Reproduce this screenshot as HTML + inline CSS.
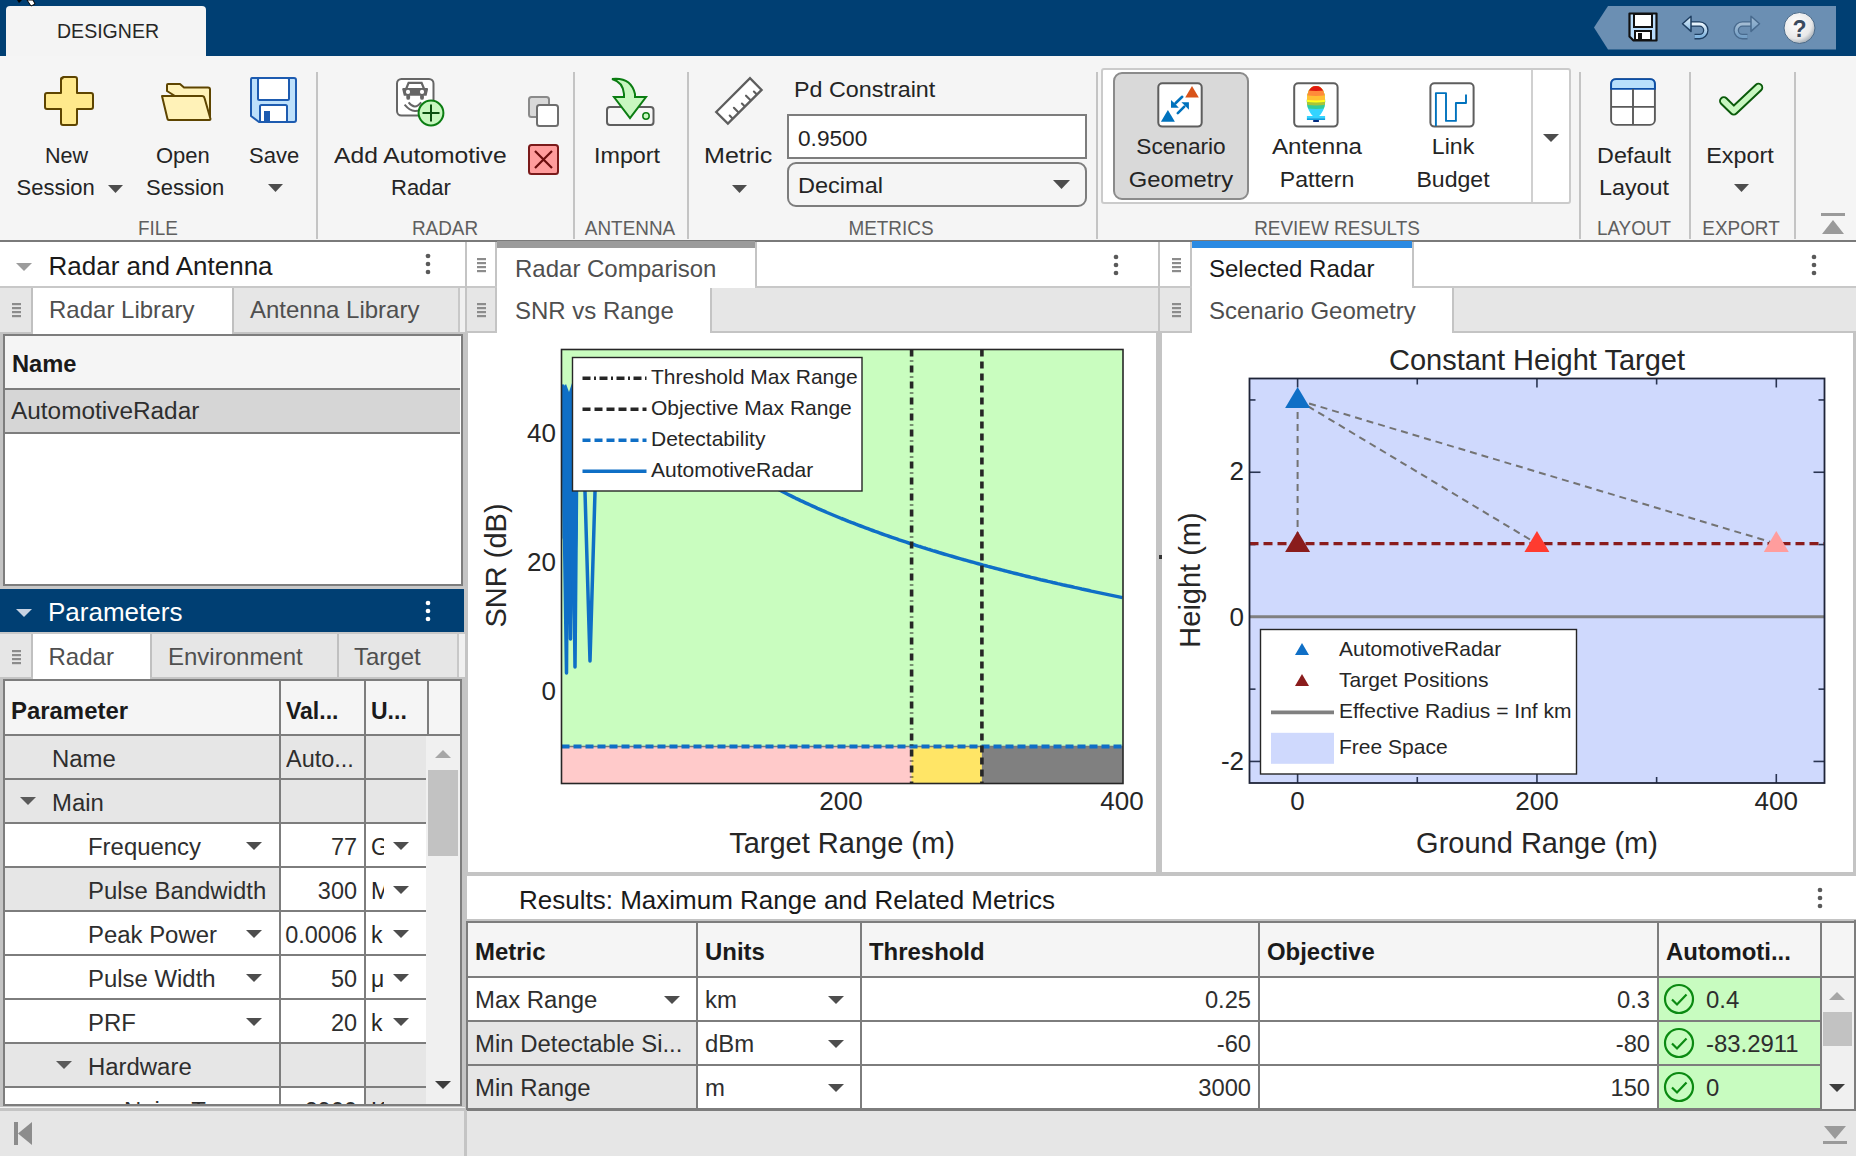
<!DOCTYPE html>
<html><head><meta charset="utf-8"><style>
html,body{margin:0;padding:0;width:1856px;height:1156px;overflow:hidden;background:#fff;}
body{position:relative;font-family:"Liberation Sans",sans-serif;}
.a{position:absolute;box-sizing:border-box;}
.t{position:absolute;white-space:nowrap;}
svg.a{overflow:visible;}
</style></head><body>
<div class="a" style="left:0px;top:0px;width:1856px;height:56px;background:#003f73;"></div>
<div class="a" style="left:6px;top:6px;width:200px;height:50px;background:#f4f4f4;border-radius:4px 4px 0 0"></div>
<div class="t" style="left:57px;top:20.42px;font-size:21px;line-height:21px;color:#262626;transform: scaleX(0.93);transform-origin:left center;">DESIGNER</div>
<svg class="a" style="left:14px;top:0px;" width="24" height="8" viewBox="0 0 24 8"><path d="M3 0 L8 0 L5 3 Z" fill="#000"/><path d="M13 0 L19 0 L21 4 L17 6 Z" fill="#fff" stroke="#000" stroke-width="1"/></svg>
<svg class="a" style="left:1592px;top:5px;" width="246" height="46" viewBox="0 0 246 46"><polygon points="2,22.5 16,1 244,1 244,44.5 16,44.5" fill="#6b8fb3"/><g transform="translate(36,7)"><path d="M1.5 1.5 H28.5 V28.5 H5.5 L1.5 24.5 Z" fill="#b9dcfb" stroke="#111" stroke-width="2.2" stroke-linejoin="round"/><rect x="6" y="2" width="18" height="13" fill="#fff" stroke="#111" stroke-width="2"/><rect x="7" y="19" width="16" height="9" fill="#fff" stroke="#111" stroke-width="2"/><rect x="10" y="21" width="4" height="7" fill="#111"/></g><defs><linearGradient id="ug" x1="0" y1="0" x2="0" y2="1"><stop offset="0" stop-color="#e8f4fc"/><stop offset="1" stop-color="#7fb3de"/></linearGradient></defs><g><path d="M98 19 H107.5 A6.3 6.3 0 0 1 107.5 31.6 H102.5" fill="none" stroke="#1f3f62" stroke-width="5.6"/><path d="M98 19 H107.5 A6.3 6.3 0 0 1 107.5 31.6 H102.5" fill="none" stroke="url(#ug)" stroke-width="3"/><polygon points="90.5,18.8 99,11.2 99,26.4" fill="url(#ug)" stroke="#1f3f62" stroke-width="1.5" stroke-linejoin="round"/></g><g opacity="0.45"><path d="M160 19 H150.5 A6.3 6.3 0 0 0 150.5 31.6 H155.5" fill="none" stroke="#1f3f62" stroke-width="5.6"/><path d="M160 19 H150.5 A6.3 6.3 0 0 0 150.5 31.6 H155.5" fill="none" stroke="url(#ug)" stroke-width="3"/><polygon points="167.5,18.8 159,11.2 159,26.4" fill="url(#ug)" stroke="#1f3f62" stroke-width="1.5" stroke-linejoin="round"/></g><defs><radialGradient id="hg" cx="0.4" cy="0.35" r="0.7"><stop offset="0" stop-color="#ffffff"/><stop offset="0.7" stop-color="#e8e8e8"/><stop offset="1" stop-color="#9aa4ae"/></radialGradient></defs><circle cx="207.5" cy="23" r="15.5" fill="url(#hg)" stroke="#4a6a8a" stroke-width="1"/><text x="207.5" y="31.5" text-anchor="middle" font-family="Liberation Sans" font-weight="700" font-size="23" fill="#3a4a5e">?</text></svg>
<div class="a" style="left:0px;top:56px;width:1856px;height:185px;background:#f5f5f5;"></div>
<div class="a" style="left:0px;top:240px;width:1856px;height:2px;background:#7a7a7a;"></div>
<div class="a" style="left:316px;top:72px;width:2px;height:167px;background:#c4c4c4;"></div>
<div class="a" style="left:573px;top:72px;width:2px;height:167px;background:#c4c4c4;"></div>
<div class="a" style="left:687px;top:72px;width:2px;height:167px;background:#c4c4c4;"></div>
<div class="a" style="left:1096px;top:72px;width:2px;height:167px;background:#c4c4c4;"></div>
<div class="a" style="left:1579px;top:72px;width:2px;height:167px;background:#c4c4c4;"></div>
<div class="a" style="left:1689px;top:72px;width:2px;height:167px;background:#c4c4c4;"></div>
<div class="a" style="left:1794px;top:72px;width:2px;height:167px;background:#c4c4c4;"></div>
<svg class="a" style="left:44px;top:76px;" width="50" height="50" viewBox="0 0 50 50"><path d="M18.5 2.5 Q17 1 17 3 V17 H3 Q1 17 1 19 V31 Q1 33 3 33 H17 V47 Q17 49 19 49 H31 Q33 49 33 47 V33 H47 Q49 33 49 31 V19 Q49 17 47 17 H33 V3 Q33 1 31 1 H19 Z" fill="#ffe98c" stroke="#5e4500" stroke-width="2" stroke-linejoin="round"/></svg>
<div class="t" style="left:44.5px;top:144.68px;font-size:22px;line-height:22px;color:#242424;transform: scaleX(0.98);transform-origin:left center;">New</div>
<div class="t" style="left:16.5px;top:176.98px;font-size:22px;line-height:22px;color:#242424;transform: scaleX(1.0);transform-origin:left center;">Session</div>
<svg class="a" style="left:107.5px;top:184.5px;" width="15" height="8" viewBox="0 0 15 8"><polygon points="0,0 15,0 7.5,8" fill="#4d4d4d"/></svg>
<svg class="a" style="left:160px;top:83px;" width="52" height="40" viewBox="0 0 52 40"><path d="M7 8 V2 Q7 1 8 1 H20 L24 4.5 H48 Q50 4.5 50 6.5 V35 Z" fill="#fff2b8" stroke="#5e4500" stroke-width="2" stroke-linejoin="round"/><path d="M2 13 H42 Q44 13 44.5 15 L50.5 36 Q50.5 37 49.5 37 H9 Q8 37 7.5 36 Z" fill="#fff2b8" stroke="#5e4500" stroke-width="2" stroke-linejoin="round"/></svg>
<div class="t" style="left:156px;top:144.68px;font-size:22px;line-height:22px;color:#242424;">Open</div>
<div class="t" style="left:146px;top:176.98px;font-size:22px;line-height:22px;color:#242424;">Session</div>
<svg class="a" style="left:249px;top:76px;" width="49" height="48" viewBox="0 0 49 48"><path d="M3 2 H45 Q47 2 47 4 V44 Q47 46 45 46 H10 L2 40 V4 Q2 2 3 2 Z" fill="#bde0fb" stroke="#1d5bb0" stroke-width="2" stroke-linejoin="round"/><rect x="9" y="2" width="31" height="22" rx="1.5" fill="#fff" stroke="#1d5bb0" stroke-width="2"/><rect x="11" y="29" width="27" height="17" rx="1.5" fill="#fff" stroke="#1d5bb0" stroke-width="2"/><rect x="15" y="35" width="6" height="11" fill="#1d5bb0"/></svg>
<div class="t" style="left:249px;top:144.68px;font-size:22px;line-height:22px;color:#242424;">Save</div>
<svg class="a" style="left:267.5px;top:184.0px;" width="15" height="8" viewBox="0 0 15 8"><polygon points="0,0 15,0 7.5,8" fill="#4d4d4d"/></svg>
<svg class="a" style="left:394px;top:76px;" width="56" height="54" viewBox="0 0 56 54"><rect x="3" y="3" width="36.5" height="36.5" rx="4.5" fill="#fff" stroke="#666" stroke-width="2"/><path d="M12.3 12.5 L14.6 6.8 H27.6 L29.9 12.5" fill="none" stroke="#666" stroke-width="2.2"/><path d="M9 12 H33.3 Q34.2 12 34 13.5 L32.6 19.8 H9.8 L8.3 13.5 Q8.1 12 9 12 Z" fill="#666"/><circle cx="14" cy="15.9" r="2.1" fill="#fff"/><circle cx="28" cy="15.9" r="2.1" fill="#fff"/><rect x="12.3" y="18" width="3.8" height="5.8" rx="1.9" fill="#666"/><rect x="26.1" y="18" width="3.8" height="5.8" rx="1.9" fill="#666"/><path d="M14.6 26.4 Q20.8 34.5 27.2 26.4" fill="none" stroke="#666" stroke-width="2"/><path d="M10.6 28.6 Q20.8 41 31.5 29.5" fill="none" stroke="#666" stroke-width="2"/><circle cx="37" cy="37" r="12.4" fill="#c8f7c0" stroke="#0b7d12" stroke-width="2"/><path d="M37 28.5 V45.5 M28.5 37 H45.5" stroke="#0b4f10" stroke-width="2"/></svg>
<div class="t" style="left:334px;top:144.68px;font-size:22px;line-height:22px;color:#242424;transform: scaleX(1.12);transform-origin:left center;">Add Automotive</div>
<div class="t" style="left:391px;top:176.98px;font-size:22px;line-height:22px;color:#242424;transform: scaleX(1.0);transform-origin:left center;">Radar</div>
<svg class="a" style="left:527px;top:95px;" width="33" height="33" viewBox="0 0 33 33"><rect x="2" y="2" width="20" height="20" rx="2.5" fill="#d9d9d9" stroke="#8a8a8a" stroke-width="2"/><rect x="10" y="10" width="21" height="21" rx="2.5" fill="#fff" stroke="#6e6e6e" stroke-width="2"/></svg>
<svg class="a" style="left:527px;top:143px;" width="33" height="33" viewBox="0 0 33 33"><rect x="2" y="2" width="29" height="29" rx="2.5" fill="#ff9c9c" stroke="#7a1a1a" stroke-width="2"/><path d="M8 8 L25 25 M25 8 L8 25" stroke="#6b0d0d" stroke-width="2.2"/></svg>
<svg class="a" style="left:604px;top:76px;" width="52" height="52" viewBox="0 0 52 52"><rect x="3" y="31" width="46.5" height="18" rx="3" fill="#f6f6f6" stroke="#5e5e5e" stroke-width="2"/><circle cx="42" cy="40" r="3.2" fill="#c8f7c0" stroke="#0b7d12" stroke-width="1.5"/><path d="M8 3 Q27 1 31 18 V21 H42 L26 42 L10 21 H20 V18 Q19 6 8 3 Z" fill="#c8f7c0" stroke="#0b7d12" stroke-width="2" stroke-linejoin="miter"/></svg>
<div class="t" style="left:594px;top:144.68px;font-size:22px;line-height:22px;color:#242424;transform: scaleX(1.06);transform-origin:left center;">Import</div>
<svg class="a" style="left:712px;top:74px;" width="54" height="54" viewBox="0 0 54 54"><polygon points="4.2,38 38,4.2 49.6,15.9 15.9,49.6" fill="#fff" stroke="#5e5e5e" stroke-width="2.3" stroke-linejoin="miter"/><path d="M20.3 44.2 L17.7 41.6 M26.3 38.2 L21.9 33.8 M32.4 32.1 L29.9 29.6 M38.4 26.1 L34 21.7 M44.4 20.1 L41.9 17.6" stroke="#5e5e5e" stroke-width="2.1" stroke-linecap="round"/></svg>
<div class="t" style="left:704px;top:144.68px;font-size:22px;line-height:22px;color:#242424;transform: scaleX(1.14);transform-origin:left center;">Metric</div>
<svg class="a" style="left:731.5px;top:184.5px;" width="15" height="8" viewBox="0 0 15 8"><polygon points="0,0 15,0 7.5,8" fill="#4d4d4d"/></svg>
<div class="t" style="left:794px;top:79.38px;font-size:22px;line-height:22px;color:#242424;transform: scaleX(1.06);transform-origin:left center;">Pd Constraint</div>
<div class="a" style="left:787px;top:114px;width:300px;height:45px;background:#fff;border:2px solid #7d7d7d"></div>
<div class="t" style="left:798px;top:128.18px;font-size:22px;line-height:22px;color:#242424;transform: scaleX(1.03);transform-origin:left center;">0.9500</div>
<div class="a" style="left:787px;top:162px;width:300px;height:45px;background:#f5f5f5;border:2px solid #7d7d7d;border-radius:9px"></div>
<div class="t" style="left:798px;top:175.38px;font-size:22px;line-height:22px;color:#242424;transform: scaleX(1.07);transform-origin:left center;">Decimal</div>
<svg class="a" style="left:1052.5px;top:179.5px;" width="17" height="9" viewBox="0 0 17 9"><polygon points="0,0 17,0 8.5,9" fill="#4d4d4d"/></svg>
<div class="a" style="left:1101px;top:68px;width:470px;height:136px;background:#fff;border:2px solid #cbcbcb;border-radius:3px"></div>
<div class="a" style="left:1531px;top:70px;width:2px;height:132px;background:#d0d0d0;"></div>
<svg class="a" style="left:1543.0px;top:133.5px;" width="16" height="8" viewBox="0 0 16 8"><polygon points="0,0 16,0 8.0,8" fill="#4d4d4d"/></svg>
<div class="a" style="left:1113px;top:72px;width:136px;height:128px;background:#d9d9d9;border:2px solid #8b8b8b;border-radius:9px"></div>
<svg class="a" style="left:1156px;top:81px;" width="48" height="48" viewBox="0 0 48 48"><rect x="2.3" y="2.2" width="43.4" height="43.4" rx="4" fill="#fff" stroke="#5e5e5e" stroke-width="2"/><polygon points="36,5.1 42.8,16.5 29.2,16.5" fill="#d95319"/><polygon points="11.9,29 18.9,40.7 4.9,40.7" fill="#0072bd"/><path d="M26.2 15.8 L19.5 22.3 M21.8 32.1 L28.3 25.6" stroke="#0072bd" stroke-width="2.6" stroke-linecap="round"/><polygon points="15,19.1 15,26.7 22.8,26.7 19.6,23.3" fill="#0072bd"/><polygon points="32.9,21.2 25.4,21.2 28.8,24.6 32.9,28.7" fill="#0072bd"/></svg>
<div class="t" style="left:1181px;top:136.38px;font-size:22px;line-height:22px;color:#242424;transform:translateX(-50%) scaleX(1.03);transform-origin:center center;">Scenario</div>
<div class="t" style="left:1181px;top:168.88px;font-size:22px;line-height:22px;color:#242424;transform:translateX(-50%) scaleX(1.08);transform-origin:center center;">Geometry</div>
<svg class="a" style="left:1292px;top:81px;" width="48" height="48" viewBox="0 0 48 48"><rect x="2.2" y="2.2" width="43.4" height="43.4" rx="4" fill="#fff" stroke="#5e5e5e" stroke-width="2"/><defs><clipPath id="egg"><path d="M24 4.9 C30.5 4.9 33.1 12 33.1 20 C33.1 28 29.5 33 26.5 35.5 H21.5 C18.5 33 14.9 28 14.9 20 C14.9 12 17.5 4.9 24 4.9 Z"/></clipPath></defs><g clip-path="url(#egg)"><path d="M10 0 H38 V40 Q24 43.2 10 40 Z" fill="#33d4ff"/><path d="M10 0 H38 V26.5 Q24 29.7 10 26.5 Z" fill="#33cc99"/><path d="M10 0 H38 V23 Q24 26.2 10 23 Z" fill="#a8c43a"/><path d="M10 0 H38 V20 Q24 23.2 10 20 Z" fill="#ffff1a"/><path d="M10 0 H38 V18 Q24 21.2 10 18 Z" fill="#ffbf33"/><path d="M10 0 H38 V13.5 Q24 16.7 10 13.5 Z" fill="#ff8a3a"/><path d="M10 0 H38 V8.5 Q24 11.7 10 8.5 Z" fill="#e0190f"/></g><rect x="14.9" y="35" width="18.2" height="2.4" fill="#33d4ff"/><rect x="14.9" y="37.2" width="18.2" height="1.8" fill="#0aa0e0"/><rect x="21.2" y="39" width="5.7" height="2" fill="#002a80"/></svg>
<div class="t" style="left:1317px;top:136.38px;font-size:22px;line-height:22px;color:#242424;transform:translateX(-50%) scaleX(1.1);transform-origin:center center;">Antenna</div>
<div class="t" style="left:1317px;top:168.88px;font-size:22px;line-height:22px;color:#242424;transform:translateX(-50%) scaleX(1.05);transform-origin:center center;">Pattern</div>
<svg class="a" style="left:1428px;top:81px;" width="48" height="48" viewBox="0 0 48 48"><rect x="2.4" y="2.2" width="43.2" height="43.4" rx="4" fill="#fff" stroke="#5e5e5e" stroke-width="2"/><path d="M7.9 45 V12.1 H18 V39.9 H27.9 V22 H38 V13.4" fill="none" stroke="#0072bd" stroke-width="1.9" stroke-linejoin="round"/></svg>
<div class="t" style="left:1453px;top:136.38px;font-size:22px;line-height:22px;color:#242424;transform:translateX(-50%) scaleX(1.05);transform-origin:center center;">Link</div>
<div class="t" style="left:1453px;top:168.88px;font-size:22px;line-height:22px;color:#242424;transform:translateX(-50%) scaleX(1.05);transform-origin:center center;">Budget</div>
<svg class="a" style="left:1608px;top:77px;" width="50" height="50" viewBox="0 0 50 50"><rect x="3.1" y="2.1" width="43.8" height="45.8" rx="5" fill="#fff" stroke="#5a5a5a" stroke-width="1.9"/><path d="M3.1 11.9 V7.1 Q3.1 2.1 8.1 2.1 H41.9 Q46.9 2.1 46.9 7.1 V11.9 Z" fill="#b8e0fc" stroke="#0b4fa8" stroke-width="1.9"/><path d="M3.1 29.9 H46.9 M25 12 V48" stroke="#5a5a5a" stroke-width="1.9"/></svg>
<div class="t" style="left:1634px;top:144.68px;font-size:22px;line-height:22px;color:#242424;transform:translateX(-50%) scaleX(1.06);transform-origin:center center;">Default</div>
<div class="t" style="left:1634px;top:176.98px;font-size:22px;line-height:22px;color:#242424;transform:translateX(-50%) scaleX(1.06);transform-origin:center center;">Layout</div>
<svg class="a" style="left:1716px;top:80px;" width="50" height="40" viewBox="0 0 50 40"><path d="M7.8 21 L17.8 30.8 L42.5 7.5" fill="none" stroke="#0a5a0a" stroke-width="9.5" stroke-linecap="round" stroke-linejoin="round"/><path d="M7.8 21 L17.8 30.8 L42.5 7.5" fill="none" stroke="#c8f7c0" stroke-width="5.6" stroke-linecap="round" stroke-linejoin="round"/></svg>
<div class="t" style="left:1740px;top:144.68px;font-size:22px;line-height:22px;color:#242424;transform:translateX(-50%) scaleX(1.06);transform-origin:center center;">Export</div>
<svg class="a" style="left:1733.5px;top:184.0px;" width="15" height="8" viewBox="0 0 15 8"><polygon points="0,0 15,0 7.5,8" fill="#4d4d4d"/></svg>
<div class="t" style="left:158px;top:217.22px;font-size:21px;line-height:21px;color:#5f5f5f;transform:translateX(-50%) scaleX(0.9);transform-origin:center center;">FILE</div>
<div class="t" style="left:445px;top:217.22px;font-size:21px;line-height:21px;color:#5f5f5f;transform:translateX(-50%) scaleX(0.9);transform-origin:center center;">RADAR</div>
<div class="t" style="left:630px;top:217.22px;font-size:21px;line-height:21px;color:#5f5f5f;transform:translateX(-50%) scaleX(0.9);transform-origin:center center;">ANTENNA</div>
<div class="t" style="left:891px;top:217.22px;font-size:21px;line-height:21px;color:#5f5f5f;transform:translateX(-50%) scaleX(0.9);transform-origin:center center;">METRICS</div>
<div class="t" style="left:1337px;top:217.22px;font-size:21px;line-height:21px;color:#5f5f5f;transform:translateX(-50%) scaleX(0.9);transform-origin:center center;">REVIEW RESULTS</div>
<div class="t" style="left:1634px;top:217.22px;font-size:21px;line-height:21px;color:#5f5f5f;transform:translateX(-50%) scaleX(0.9);transform-origin:center center;">LAYOUT</div>
<div class="t" style="left:1741px;top:217.22px;font-size:21px;line-height:21px;color:#5f5f5f;transform:translateX(-50%) scaleX(0.9);transform-origin:center center;">EXPORT</div>
<svg class="a" style="left:1820px;top:212px;" width="26" height="24" viewBox="0 0 26 24"><rect x="1" y="1" width="24" height="3" fill="#9a9a9a"/><polygon points="2,22 24,22 13,8" fill="#9a9a9a"/></svg>
<div class="a" style="left:0px;top:242px;width:465px;height:914px;background:#c4c4c4;"></div>
<div class="a" style="left:0px;top:242px;width:465px;height:44px;background:#fff;"></div>
<div class="a" style="left:0px;top:286px;width:465px;height:2px;background:#c8c8c8;"></div>
<svg class="a" style="left:16px;top:263px;" width="16" height="8" viewBox="0 0 16 8"><polygon points="0,0 16,0 8.0,8" fill="#9c9c9c"/></svg>
<div class="t" style="left:48.5px;top:253.49px;font-size:26px;line-height:26px;color:#1a1a1a;transform: scaleX(1.0);transform-origin:left center;">Radar and Antenna</div>
<svg class="a" style="left:425px;top:253px;" width="6" height="22" viewBox="0 0 6 22"><circle cx="3" cy="3" r="2.35" fill="#5a5a5a"/><circle cx="3" cy="11" r="2.35" fill="#5a5a5a"/><circle cx="3" cy="19" r="2.35" fill="#5a5a5a"/></svg>
<div class="a" style="left:0px;top:288px;width:465px;height:45px;background:#f0f0f0;"></div>
<div class="a" style="left:0px;top:288px;width:31px;height:45px;background:#e6e6e6;"></div>
<div class="a" style="left:31px;top:288px;width:2px;height:45px;background:#c0c0c0;"></div>
<svg class="a" style="left:12px;top:303px;" width="9" height="15" viewBox="0 0 9 15"><rect x="0" y="0" width="9" height="2.2" fill="#8c8c8c"/><rect x="0" y="4" width="9" height="2.2" fill="#8c8c8c"/><rect x="0" y="8" width="9" height="2.2" fill="#8c8c8c"/><rect x="0" y="12" width="9" height="2.2" fill="#8c8c8c"/></svg>
<div class="a" style="left:33px;top:288px;width:199px;height:46px;background:#fff;"></div>
<div class="a" style="left:232px;top:288px;width:2px;height:45px;background:#c0c0c0;"></div>
<div class="a" style="left:234px;top:288px;width:224px;height:45px;background:#e6e6e6;"></div>
<div class="a" style="left:458px;top:288px;width:2px;height:45px;background:#c8c8c8;"></div>
<div class="a" style="left:0px;top:332px;width:33px;height:2px;background:#c4c4c4;"></div>
<div class="a" style="left:232px;top:332px;width:233px;height:2px;background:#c4c4c4;"></div>
<div class="t" style="left:49px;top:298.48px;font-size:24px;line-height:24px;color:#4f4f4f;">Radar Library</div>
<div class="t" style="left:250px;top:298.48px;font-size:24px;line-height:24px;color:#4f4f4f;">Antenna Library</div>
<div class="a" style="left:3px;top:334px;width:460px;height:252px;background:#fff;border:2px solid #7d7d7d"></div>
<div class="a" style="left:5px;top:336px;width:455px;height:52px;background:#f5f5f5;"></div>
<div class="a" style="left:5px;top:388px;width:455px;height:2px;background:#7d7d7d;"></div>
<div class="a" style="left:5px;top:390px;width:455px;height:42px;background:#d6d6d6;"></div>
<div class="a" style="left:5px;top:432px;width:455px;height:2px;background:#7d7d7d;"></div>
<div class="t" style="left:11.5px;top:353.13px;font-size:23px;line-height:23px;color:#1a1a1a;font-weight:700;transform: scaleX(1.03);transform-origin:left center;">Name</div>
<div class="t" style="left:10.5px;top:400.33px;font-size:23px;line-height:23px;color:#2e2e2e;transform: scaleX(1.06);transform-origin:left center;">AutomotiveRadar</div>
<div class="a" style="left:0px;top:586px;width:465px;height:3px;background:#c8c8c8;"></div>
<div class="a" style="left:0px;top:589px;width:464px;height:43px;background:#003f73;"></div>
<svg class="a" style="left:16px;top:609px;" width="16" height="8" viewBox="0 0 16 8"><polygon points="0,0 16,0 8.0,8" fill="#c8d3e3"/></svg>
<div class="t" style="left:48px;top:598.99px;font-size:26px;line-height:26px;color:#ffffff;">Parameters</div>
<svg class="a" style="left:425px;top:599.5px;" width="6" height="22" viewBox="0 0 6 22"><circle cx="3" cy="3" r="2.35" fill="#ffffff"/><circle cx="3" cy="11" r="2.35" fill="#ffffff"/><circle cx="3" cy="19" r="2.35" fill="#ffffff"/></svg>
<div class="a" style="left:0px;top:632px;width:465px;height:47px;background:#f0f0f0;"></div>
<div class="a" style="left:0px;top:632px;width:31px;height:47px;background:#e6e6e6;"></div>
<div class="a" style="left:31px;top:632px;width:2px;height:47px;background:#c0c0c0;"></div>
<svg class="a" style="left:12px;top:650px;" width="9" height="15" viewBox="0 0 9 15"><rect x="0" y="0" width="9" height="2.2" fill="#8c8c8c"/><rect x="0" y="4" width="9" height="2.2" fill="#8c8c8c"/><rect x="0" y="8" width="9" height="2.2" fill="#8c8c8c"/><rect x="0" y="12" width="9" height="2.2" fill="#8c8c8c"/></svg>
<div class="a" style="left:33px;top:632px;width:117px;height:48px;background:#fff;"></div>
<div class="a" style="left:150px;top:632px;width:2px;height:47px;background:#c0c0c0;"></div>
<div class="a" style="left:152px;top:632px;width:185px;height:47px;background:#e6e6e6;"></div>
<div class="a" style="left:337px;top:632px;width:2px;height:47px;background:#c0c0c0;"></div>
<div class="a" style="left:339px;top:632px;width:118px;height:47px;background:#e6e6e6;"></div>
<div class="a" style="left:457px;top:632px;width:2px;height:47px;background:#c8c8c8;"></div>
<div class="a" style="left:0px;top:677px;width:33px;height:2px;background:#c4c4c4;"></div>
<div class="a" style="left:150px;top:677px;width:315px;height:2px;background:#c4c4c4;"></div>
<div class="a" style="left:0px;top:632px;width:465px;height:2px;background:#c8c8c8;"></div>
<div class="t" style="left:48.5px;top:644.68px;font-size:24px;line-height:24px;color:#4f4f4f;">Radar</div>
<div class="t" style="left:168px;top:644.68px;font-size:24px;line-height:24px;color:#4f4f4f;">Environment</div>
<div class="t" style="left:354px;top:644.68px;font-size:24px;line-height:24px;color:#4f4f4f;">Target</div>
<div class="a" style="left:3px;top:679px;width:459px;height:427px;background:#fff;border:2px solid #7d7d7d"></div>
<div class="a" style="left:5px;top:681px;width:455px;height:53px;background:#f5f5f5;"></div>
<div class="a" style="left:5px;top:734px;width:455px;height:2px;background:#7d7d7d;"></div>
<div class="t" style="left:11px;top:699.53px;font-size:23px;line-height:23px;color:#1a1a1a;font-weight:700;transform: scaleX(1.04);transform-origin:left center;">Parameter</div>
<div class="t" style="left:286px;top:699.53px;font-size:23px;line-height:23px;color:#1a1a1a;font-weight:700;transform: scaleX(1.0);transform-origin:left center;">Val...</div>
<div class="t" style="left:371px;top:699.53px;font-size:23px;line-height:23px;color:#1a1a1a;font-weight:700;transform: scaleX(1.0);transform-origin:left center;">U...</div>
<div class="a" style="left:5px;top:736px;width:421px;height:368px;overflow:hidden">
<div class="a" style="left:0;top:0px;width:274px;height:42px;background:#e6e6e6"></div>
<div class="a" style="left:276px;top:0px;width:83px;height:42px;background:#e6e6e6"></div>
<div class="a" style="left:361px;top:0px;width:61px;height:42px;background:#e6e6e6"></div>
<div class="a" style="left:0;top:42px;width:422px;height:2px;background:#7d7d7d"></div>
<div class="a" style="left:0;top:0px;width:272px;height:42px;overflow:hidden">
<div class="t" style="left:47px;top:11.53px;font-size:23px;line-height:23px;color:#2e2e2e;transform: scaleX(1.04);transform-origin:left center;">Name</div>
</div>
<div class="t" style="left:281px;top:11.53px;font-size:23px;line-height:23px;color:#2e2e2e;transform: scaleX(1.02);transform-origin:left center;">Auto...</div>
<div class="a" style="left:0;top:44px;width:274px;height:42px;background:#e6e6e6"></div>
<div class="a" style="left:276px;top:44px;width:83px;height:42px;background:#e6e6e6"></div>
<div class="a" style="left:361px;top:44px;width:61px;height:42px;background:#e6e6e6"></div>
<div class="a" style="left:0;top:86px;width:422px;height:2px;background:#7d7d7d"></div>
<div class="a" style="left:0;top:44px;width:272px;height:42px;overflow:hidden">
<div class="t" style="left:47px;top:11.53px;font-size:23px;line-height:23px;color:#2e2e2e;transform: scaleX(1.04);transform-origin:left center;">Main</div>
</div>
<svg class="a" style="left:15px;top:61px" width="16" height="8"><polygon points="0,0 16,0 8,8" fill="#5a5a5a"/></svg>
<div class="a" style="left:0;top:88px;width:274px;height:42px;background:#fff"></div>
<div class="a" style="left:276px;top:88px;width:83px;height:42px;background:#fff"></div>
<div class="a" style="left:361px;top:88px;width:61px;height:42px;background:#fff"></div>
<div class="a" style="left:0;top:130px;width:422px;height:2px;background:#7d7d7d"></div>
<div class="a" style="left:0;top:88px;width:272px;height:42px;overflow:hidden">
<div class="t" style="left:83px;top:11.53px;font-size:23px;line-height:23px;color:#2e2e2e;transform: scaleX(1.04);transform-origin:left center;">Frequency</div>
</div>
<svg class="a" style="left:241px;top:106px" width="16" height="8"><polygon points="0,0 16,0 8,8" fill="#4d4d4d"/></svg>
<div class="t" style="left:352px;top:99.53px;font-size:23px;line-height:23px;color:#2e2e2e;transform:translateX(-100%) scaleX(1.02);transform-origin:right center;">77</div>
<div class="a" style="left:361px;top:88px;width:18px;height:42px;overflow:hidden">
<div class="t" style="left:5px;top:11.53px;font-size:23px;line-height:23px;color:#262626;">G</div>
</div>
<svg class="a" style="left:388px;top:106px" width="16" height="8"><polygon points="0,0 16,0 8,8" fill="#4d4d4d"/></svg>
<div class="a" style="left:0;top:132px;width:274px;height:42px;background:#e6e6e6"></div>
<div class="a" style="left:276px;top:132px;width:83px;height:42px;background:#fff"></div>
<div class="a" style="left:361px;top:132px;width:61px;height:42px;background:#fff"></div>
<div class="a" style="left:0;top:174px;width:422px;height:2px;background:#7d7d7d"></div>
<div class="a" style="left:0;top:132px;width:272px;height:42px;overflow:hidden">
<div class="t" style="left:83px;top:11.53px;font-size:23px;line-height:23px;color:#2e2e2e;transform: scaleX(1.04);transform-origin:left center;">Pulse Bandwidth</div>
</div>
<div class="t" style="left:352px;top:143.53px;font-size:23px;line-height:23px;color:#2e2e2e;transform:translateX(-100%) scaleX(1.02);transform-origin:right center;">300</div>
<div class="a" style="left:361px;top:132px;width:18px;height:42px;overflow:hidden">
<div class="t" style="left:5px;top:11.53px;font-size:23px;line-height:23px;color:#262626;">M</div>
</div>
<svg class="a" style="left:388px;top:150px" width="16" height="8"><polygon points="0,0 16,0 8,8" fill="#4d4d4d"/></svg>
<div class="a" style="left:0;top:176px;width:274px;height:42px;background:#fff"></div>
<div class="a" style="left:276px;top:176px;width:83px;height:42px;background:#fff"></div>
<div class="a" style="left:361px;top:176px;width:61px;height:42px;background:#fff"></div>
<div class="a" style="left:0;top:218px;width:422px;height:2px;background:#7d7d7d"></div>
<div class="a" style="left:0;top:176px;width:272px;height:42px;overflow:hidden">
<div class="t" style="left:83px;top:11.53px;font-size:23px;line-height:23px;color:#2e2e2e;transform: scaleX(1.04);transform-origin:left center;">Peak Power</div>
</div>
<svg class="a" style="left:241px;top:194px" width="16" height="8"><polygon points="0,0 16,0 8,8" fill="#4d4d4d"/></svg>
<div class="t" style="left:352px;top:187.53px;font-size:23px;line-height:23px;color:#2e2e2e;transform:translateX(-100%) scaleX(1.02);transform-origin:right center;">0.0006</div>
<div class="a" style="left:361px;top:176px;width:18px;height:42px;overflow:hidden">
<div class="t" style="left:5px;top:11.53px;font-size:23px;line-height:23px;color:#262626;">k</div>
</div>
<svg class="a" style="left:388px;top:194px" width="16" height="8"><polygon points="0,0 16,0 8,8" fill="#4d4d4d"/></svg>
<div class="a" style="left:0;top:220px;width:274px;height:42px;background:#fff"></div>
<div class="a" style="left:276px;top:220px;width:83px;height:42px;background:#fff"></div>
<div class="a" style="left:361px;top:220px;width:61px;height:42px;background:#fff"></div>
<div class="a" style="left:0;top:262px;width:422px;height:2px;background:#7d7d7d"></div>
<div class="a" style="left:0;top:220px;width:272px;height:42px;overflow:hidden">
<div class="t" style="left:83px;top:11.53px;font-size:23px;line-height:23px;color:#2e2e2e;transform: scaleX(1.04);transform-origin:left center;">Pulse Width</div>
</div>
<svg class="a" style="left:241px;top:238px" width="16" height="8"><polygon points="0,0 16,0 8,8" fill="#4d4d4d"/></svg>
<div class="t" style="left:352px;top:231.53px;font-size:23px;line-height:23px;color:#2e2e2e;transform:translateX(-100%) scaleX(1.02);transform-origin:right center;">50</div>
<div class="a" style="left:361px;top:220px;width:18px;height:42px;overflow:hidden">
<div class="t" style="left:5px;top:11.53px;font-size:23px;line-height:23px;color:#262626;">μ</div>
</div>
<svg class="a" style="left:388px;top:238px" width="16" height="8"><polygon points="0,0 16,0 8,8" fill="#4d4d4d"/></svg>
<div class="a" style="left:0;top:264px;width:274px;height:42px;background:#fff"></div>
<div class="a" style="left:276px;top:264px;width:83px;height:42px;background:#fff"></div>
<div class="a" style="left:361px;top:264px;width:61px;height:42px;background:#fff"></div>
<div class="a" style="left:0;top:306px;width:422px;height:2px;background:#7d7d7d"></div>
<div class="a" style="left:0;top:264px;width:272px;height:42px;overflow:hidden">
<div class="t" style="left:83px;top:11.53px;font-size:23px;line-height:23px;color:#2e2e2e;transform: scaleX(1.04);transform-origin:left center;">PRF</div>
</div>
<svg class="a" style="left:241px;top:282px" width="16" height="8"><polygon points="0,0 16,0 8,8" fill="#4d4d4d"/></svg>
<div class="t" style="left:352px;top:275.53px;font-size:23px;line-height:23px;color:#2e2e2e;transform:translateX(-100%) scaleX(1.02);transform-origin:right center;">20</div>
<div class="a" style="left:361px;top:264px;width:18px;height:42px;overflow:hidden">
<div class="t" style="left:5px;top:11.53px;font-size:23px;line-height:23px;color:#262626;">k</div>
</div>
<svg class="a" style="left:388px;top:282px" width="16" height="8"><polygon points="0,0 16,0 8,8" fill="#4d4d4d"/></svg>
<div class="a" style="left:0;top:308px;width:274px;height:42px;background:#e6e6e6"></div>
<div class="a" style="left:276px;top:308px;width:83px;height:42px;background:#e6e6e6"></div>
<div class="a" style="left:361px;top:308px;width:61px;height:42px;background:#e6e6e6"></div>
<div class="a" style="left:0;top:350px;width:422px;height:2px;background:#7d7d7d"></div>
<div class="a" style="left:0;top:308px;width:272px;height:42px;overflow:hidden">
<div class="t" style="left:83px;top:11.53px;font-size:23px;line-height:23px;color:#2e2e2e;transform: scaleX(1.04);transform-origin:left center;">Hardware</div>
</div>
<svg class="a" style="left:51px;top:325px" width="16" height="8"><polygon points="0,0 16,0 8,8" fill="#5a5a5a"/></svg>
<div class="a" style="left:0;top:352px;width:274px;height:42px;background:#fff"></div>
<div class="a" style="left:276px;top:352px;width:83px;height:42px;background:#fff"></div>
<div class="a" style="left:361px;top:352px;width:61px;height:42px;background:#e6e6e6"></div>
<div class="a" style="left:0;top:394px;width:422px;height:2px;background:#7d7d7d"></div>
<div class="a" style="left:0;top:352px;width:272px;height:42px;overflow:hidden">
<div class="t" style="left:119px;top:11.53px;font-size:23px;line-height:23px;color:#2e2e2e;transform: scaleX(1.04);transform-origin:left center;">Noise Temperature</div>
</div>
<div class="t" style="left:352px;top:363.53px;font-size:23px;line-height:23px;color:#2e2e2e;transform:translateX(-100%) scaleX(1.02);transform-origin:right center;">2900</div>
<div class="a" style="left:361px;top:352px;width:18px;height:42px;overflow:hidden">
<div class="t" style="left:5px;top:11.53px;font-size:23px;line-height:23px;color:#262626;">K</div>
</div>
</div>
<div class="a" style="left:279px;top:681px;width:2px;height:424px;background:#7d7d7d;"></div>
<div class="a" style="left:364px;top:681px;width:2px;height:424px;background:#7d7d7d;"></div>
<div class="a" style="left:427px;top:681px;width:2px;height:55px;background:#7d7d7d;"></div>
<div class="a" style="left:426px;top:736px;width:34px;height:368px;background:#f0f0f0;"></div>
<svg class="a" style="left:435px;top:750px;" width="16" height="8" viewBox="0 0 16 8"><polygon points="0,8 16,8 8,0" fill="#a6a6a6"/></svg>
<div class="a" style="left:428px;top:770px;width:30px;height:86px;background:#c2c2c2;"></div>
<svg class="a" style="left:435px;top:1081px;" width="16" height="8" viewBox="0 0 16 8"><polygon points="0,0 16,0 8,8" fill="#3d3d3d"/></svg>
<div class="a" style="left:0px;top:1106px;width:465px;height:5px;background:#c4c4c4;"></div>
<div class="a" style="left:0px;top:1107px;width:465px;height:1px;background:#f2f2f2;"></div>
<div class="a" style="left:0px;top:1111px;width:465px;height:45px;background:#e6e6e6;"></div>
<svg class="a" style="left:14px;top:1122px;" width="19" height="24" viewBox="0 0 19 24"><rect x="0" y="0" width="4" height="23" fill="#8c8c8c"/><polygon points="4,11.5 18,0 18,23" fill="#8c8c8c"/></svg>
<div class="a" style="left:465px;top:242px;width:1391px;height:868px;background:#c4c4c4;"></div>
<div class="a" style="left:465px;top:242px;width:693px;height:44px;background:#fff;"></div>
<div class="a" style="left:465px;top:286px;width:693px;height:2px;background:#c8c8c8;"></div>
<div class="a" style="left:497px;top:286px;width:258px;height:2px;background:#fff;"></div>
<div class="a" style="left:495px;top:242px;width:2px;height:44px;background:#c4c4c4;"></div>
<div class="a" style="left:755px;top:242px;width:2px;height:44px;background:#c4c4c4;"></div>
<div class="a" style="left:497px;top:241px;width:258px;height:7px;background:#9b9b9b;"></div>
<svg class="a" style="left:477px;top:258px;" width="9" height="15" viewBox="0 0 9 15"><rect x="0" y="0" width="9" height="2.2" fill="#8c8c8c"/><rect x="0" y="4" width="9" height="2.2" fill="#8c8c8c"/><rect x="0" y="8" width="9" height="2.2" fill="#8c8c8c"/><rect x="0" y="12" width="9" height="2.2" fill="#8c8c8c"/></svg>
<div class="t" style="left:515px;top:256.98px;font-size:24px;line-height:24px;color:#4f4f4f;">Radar Comparison</div>
<svg class="a" style="left:1113px;top:254px;" width="6" height="22" viewBox="0 0 6 22"><circle cx="3" cy="3" r="2.35" fill="#5a5a5a"/><circle cx="3" cy="11" r="2.35" fill="#5a5a5a"/><circle cx="3" cy="19" r="2.35" fill="#5a5a5a"/></svg>
<div class="a" style="left:465px;top:288px;width:693px;height:45px;background:#e6e6e6;"></div>
<div class="a" style="left:495px;top:288px;width:2px;height:45px;background:#c4c4c4;"></div>
<svg class="a" style="left:477px;top:303px;" width="9" height="15" viewBox="0 0 9 15"><rect x="0" y="0" width="9" height="2.2" fill="#8c8c8c"/><rect x="0" y="4" width="9" height="2.2" fill="#8c8c8c"/><rect x="0" y="8" width="9" height="2.2" fill="#8c8c8c"/><rect x="0" y="12" width="9" height="2.2" fill="#8c8c8c"/></svg>
<div class="a" style="left:497px;top:288px;width:213px;height:46px;background:#fff;"></div>
<div class="a" style="left:710px;top:288px;width:2px;height:45px;background:#c4c4c4;"></div>
<div class="a" style="left:712px;top:331px;width:446px;height:2px;background:#c4c4c4;"></div>
<div class="a" style="left:465px;top:331px;width:32px;height:2px;background:#c4c4c4;"></div>
<div class="t" style="left:515px;top:298.58px;font-size:24px;line-height:24px;color:#4f4f4f;">SNR vs Range</div>
<div class="a" style="left:468px;top:333px;width:688px;height:539px;background:#fff;"></div>
<div class="a" style="left:465px;top:242px;width:2px;height:91px;background:#c4c4c4;"></div>
<div class="a" style="left:1160px;top:242px;width:696px;height:44px;background:#fff;"></div>
<div class="a" style="left:1160px;top:286px;width:696px;height:2px;background:#c8c8c8;"></div>
<div class="a" style="left:1192px;top:286px;width:220px;height:2px;background:#fff;"></div>
<div class="a" style="left:1190px;top:242px;width:2px;height:44px;background:#c4c4c4;"></div>
<div class="a" style="left:1412px;top:242px;width:2px;height:44px;background:#c4c4c4;"></div>
<div class="a" style="left:1192px;top:241px;width:220px;height:7px;background:#2b8ae2;"></div>
<svg class="a" style="left:1172px;top:258px;" width="9" height="15" viewBox="0 0 9 15"><rect x="0" y="0" width="9" height="2.2" fill="#8c8c8c"/><rect x="0" y="4" width="9" height="2.2" fill="#8c8c8c"/><rect x="0" y="8" width="9" height="2.2" fill="#8c8c8c"/><rect x="0" y="12" width="9" height="2.2" fill="#8c8c8c"/></svg>
<div class="t" style="left:1209px;top:256.98px;font-size:24px;line-height:24px;color:#1a1a1a;">Selected Radar</div>
<svg class="a" style="left:1811px;top:254px;" width="6" height="22" viewBox="0 0 6 22"><circle cx="3" cy="3" r="2.35" fill="#5a5a5a"/><circle cx="3" cy="11" r="2.35" fill="#5a5a5a"/><circle cx="3" cy="19" r="2.35" fill="#5a5a5a"/></svg>
<div class="a" style="left:1160px;top:288px;width:696px;height:45px;background:#e6e6e6;"></div>
<div class="a" style="left:1190px;top:288px;width:2px;height:45px;background:#c4c4c4;"></div>
<svg class="a" style="left:1172px;top:303px;" width="9" height="15" viewBox="0 0 9 15"><rect x="0" y="0" width="9" height="2.2" fill="#8c8c8c"/><rect x="0" y="4" width="9" height="2.2" fill="#8c8c8c"/><rect x="0" y="8" width="9" height="2.2" fill="#8c8c8c"/><rect x="0" y="12" width="9" height="2.2" fill="#8c8c8c"/></svg>
<div class="a" style="left:1192px;top:288px;width:260px;height:46px;background:#fff;"></div>
<div class="a" style="left:1452px;top:288px;width:2px;height:45px;background:#c4c4c4;"></div>
<div class="a" style="left:1454px;top:331px;width:402px;height:2px;background:#c4c4c4;"></div>
<div class="a" style="left:1160px;top:331px;width:32px;height:2px;background:#c4c4c4;"></div>
<div class="t" style="left:1209px;top:298.58px;font-size:24px;line-height:24px;color:#4f4f4f;">Scenario Geometry</div>
<div class="a" style="left:1162px;top:333px;width:691px;height:539px;background:#fff;"></div>
<div class="a" style="left:467px;top:876px;width:1389px;height:45px;background:#fff;"></div>
<div class="t" style="left:519px;top:887.29px;font-size:26px;line-height:26px;color:#1a1a1a;">Results: Maximum Range and Related Metrics</div>
<svg class="a" style="left:1817px;top:887px;" width="6" height="22" viewBox="0 0 6 22"><circle cx="3" cy="3" r="2.35" fill="#5a5a5a"/><circle cx="3" cy="11" r="2.35" fill="#5a5a5a"/><circle cx="3" cy="19" r="2.35" fill="#5a5a5a"/></svg>
<div class="a" style="left:466px;top:919px;width:1390px;height:2px;background:#c4c4c4;"></div>
<div class="a" style="left:466px;top:921px;width:1390px;height:190px;background:#fff;border:2px solid #7d7d7d;border-right:none"></div>
<div class="a" style="left:468px;top:923px;width:1388px;height:53px;background:#f5f5f5;"></div>
<div class="a" style="left:468px;top:976px;width:1388px;height:2px;background:#7d7d7d;"></div>
<div class="a" style="left:696px;top:923px;width:2px;height:186px;background:#7d7d7d;"></div>
<div class="a" style="left:860px;top:923px;width:2px;height:186px;background:#7d7d7d;"></div>
<div class="a" style="left:1258px;top:923px;width:2px;height:186px;background:#7d7d7d;"></div>
<div class="a" style="left:1657px;top:923px;width:2px;height:186px;background:#7d7d7d;"></div>
<div class="a" style="left:1820px;top:923px;width:2px;height:186px;background:#7d7d7d;"></div>
<div class="a" style="left:1854px;top:920px;width:2px;height:191px;background:#7d7d7d;"></div>
<div class="t" style="left:475px;top:941.03px;font-size:23px;line-height:23px;color:#1a1a1a;font-weight:700;transform: scaleX(1.04);transform-origin:left center;">Metric</div>
<div class="t" style="left:705px;top:941.03px;font-size:23px;line-height:23px;color:#1a1a1a;font-weight:700;transform: scaleX(1.04);transform-origin:left center;">Units</div>
<div class="t" style="left:869px;top:941.03px;font-size:23px;line-height:23px;color:#1a1a1a;font-weight:700;transform: scaleX(1.04);transform-origin:left center;">Threshold</div>
<div class="t" style="left:1267px;top:941.03px;font-size:23px;line-height:23px;color:#1a1a1a;font-weight:700;transform: scaleX(1.04);transform-origin:left center;">Objective</div>
<div class="t" style="left:1666px;top:941.03px;font-size:23px;line-height:23px;color:#1a1a1a;font-weight:700;transform: scaleX(1.04);transform-origin:left center;">Automoti...</div>
<div class="a" style="left:468px;top:978px;width:228px;height:42px;background:#fff;"></div>
<div class="a" style="left:698px;top:978px;width:162px;height:42px;background:#fff;"></div>
<div class="a" style="left:1659px;top:978px;width:161px;height:42px;background:#c8fcc0;"></div>
<div class="a" style="left:468px;top:1020px;width:1352px;height:2px;background:#7d7d7d;"></div>
<div class="t" style="left:475px;top:988.53px;font-size:23px;line-height:23px;color:#2e2e2e;transform: scaleX(1.04);transform-origin:left center;">Max Range</div>
<svg class="a" style="left:664px;top:996px;" width="16" height="8" viewBox="0 0 16 8"><polygon points="0,0 16,0 8,8" fill="#4d4d4d"/></svg>
<div class="t" style="left:705px;top:988.53px;font-size:23px;line-height:23px;color:#2e2e2e;transform: scaleX(1.04);transform-origin:left center;">km</div>
<svg class="a" style="left:828px;top:996px;" width="16" height="8" viewBox="0 0 16 8"><polygon points="0,0 16,0 8,8" fill="#4d4d4d"/></svg>
<div class="t" style="left:1251px;top:988.53px;font-size:23px;line-height:23px;color:#2e2e2e;transform:translateX(-100%) scaleX(1.03);transform-origin:right center;">0.25</div>
<div class="t" style="left:1650px;top:988.53px;font-size:23px;line-height:23px;color:#2e2e2e;transform:translateX(-100%) scaleX(1.03);transform-origin:right center;">0.3</div>
<svg class="a" style="left:1663px;top:983px;" width="32" height="32" viewBox="0 0 32 32"><circle cx="16" cy="16" r="14" fill="none" stroke="#0b8a12" stroke-width="2.2"/><path d="M9 16.5 L14 21.5 L23.5 11.5" fill="none" stroke="#0b8a12" stroke-width="2.2"/></svg>
<div class="t" style="left:1706px;top:988.53px;font-size:23px;line-height:23px;color:#2e2e2e;transform: scaleX(1.04);transform-origin:left center;">0.4</div>
<div class="a" style="left:468px;top:1022px;width:228px;height:42px;background:#e6e6e6;"></div>
<div class="a" style="left:698px;top:1022px;width:162px;height:42px;background:#fff;"></div>
<div class="a" style="left:1659px;top:1022px;width:161px;height:42px;background:#c8fcc0;"></div>
<div class="a" style="left:468px;top:1064px;width:1352px;height:2px;background:#7d7d7d;"></div>
<div class="t" style="left:475px;top:1032.53px;font-size:23px;line-height:23px;color:#2e2e2e;transform: scaleX(1.04);transform-origin:left center;">Min Detectable Si...</div>
<div class="t" style="left:705px;top:1032.53px;font-size:23px;line-height:23px;color:#2e2e2e;transform: scaleX(1.04);transform-origin:left center;">dBm</div>
<svg class="a" style="left:828px;top:1040px;" width="16" height="8" viewBox="0 0 16 8"><polygon points="0,0 16,0 8,8" fill="#4d4d4d"/></svg>
<div class="t" style="left:1251px;top:1032.53px;font-size:23px;line-height:23px;color:#2e2e2e;transform:translateX(-100%) scaleX(1.03);transform-origin:right center;">-60</div>
<div class="t" style="left:1650px;top:1032.53px;font-size:23px;line-height:23px;color:#2e2e2e;transform:translateX(-100%) scaleX(1.03);transform-origin:right center;">-80</div>
<svg class="a" style="left:1663px;top:1027px;" width="32" height="32" viewBox="0 0 32 32"><circle cx="16" cy="16" r="14" fill="none" stroke="#0b8a12" stroke-width="2.2"/><path d="M9 16.5 L14 21.5 L23.5 11.5" fill="none" stroke="#0b8a12" stroke-width="2.2"/></svg>
<div class="t" style="left:1706px;top:1032.53px;font-size:23px;line-height:23px;color:#2e2e2e;transform: scaleX(1.04);transform-origin:left center;">-83.2911</div>
<div class="a" style="left:468px;top:1066px;width:228px;height:42px;background:#e6e6e6;"></div>
<div class="a" style="left:698px;top:1066px;width:162px;height:42px;background:#fff;"></div>
<div class="a" style="left:1659px;top:1066px;width:161px;height:42px;background:#c8fcc0;"></div>
<div class="a" style="left:468px;top:1108px;width:1352px;height:2px;background:#7d7d7d;"></div>
<div class="t" style="left:475px;top:1076.53px;font-size:23px;line-height:23px;color:#2e2e2e;transform: scaleX(1.04);transform-origin:left center;">Min Range</div>
<div class="t" style="left:705px;top:1076.53px;font-size:23px;line-height:23px;color:#2e2e2e;transform: scaleX(1.04);transform-origin:left center;">m</div>
<svg class="a" style="left:828px;top:1084px;" width="16" height="8" viewBox="0 0 16 8"><polygon points="0,0 16,0 8,8" fill="#4d4d4d"/></svg>
<div class="t" style="left:1251px;top:1076.53px;font-size:23px;line-height:23px;color:#2e2e2e;transform:translateX(-100%) scaleX(1.03);transform-origin:right center;">3000</div>
<div class="t" style="left:1650px;top:1076.53px;font-size:23px;line-height:23px;color:#2e2e2e;transform:translateX(-100%) scaleX(1.03);transform-origin:right center;">150</div>
<svg class="a" style="left:1663px;top:1071px;" width="32" height="32" viewBox="0 0 32 32"><circle cx="16" cy="16" r="14" fill="none" stroke="#0b8a12" stroke-width="2.2"/><path d="M9 16.5 L14 21.5 L23.5 11.5" fill="none" stroke="#0b8a12" stroke-width="2.2"/></svg>
<div class="t" style="left:1706px;top:1076.53px;font-size:23px;line-height:23px;color:#2e2e2e;transform: scaleX(1.04);transform-origin:left center;">0</div>
<div class="a" style="left:1822px;top:978px;width:32px;height:131px;background:#f0f0f0;"></div>
<svg class="a" style="left:1829px;top:992px;" width="16" height="8" viewBox="0 0 16 8"><polygon points="0,8 16,8 8,0" fill="#a6a6a6"/></svg>
<div class="a" style="left:1823px;top:1012px;width:29px;height:34px;background:#c2c2c2;"></div>
<svg class="a" style="left:1829px;top:1084px;" width="16" height="8" viewBox="0 0 16 8"><polygon points="0,0 16,0 8,8" fill="#3d3d3d"/></svg>
<div class="a" style="left:467px;top:1111px;width:1389px;height:45px;background:#e6e6e6;"></div>
<div class="a" style="left:464px;top:1110px;width:3px;height:46px;background:#c4c4c4;"></div>
<svg class="a" style="left:1822px;top:1124px;" width="26" height="22" viewBox="0 0 26 22"><polygon points="2,2 24,2 13,15" fill="#9a9a9a"/><rect x="1" y="17" width="24" height="3" fill="#9a9a9a"/></svg>
<div class="a" style="left:1159px;top:555px;width:3px;height:4px;background:#333;"></div>
<svg class="a" style="left:0;top:0;overflow:hidden" width="1856" height="1156" viewBox="0 0 1856 1156"><rect x="561.5" y="349.5" width="561.5" height="434.0" fill="#c9fdbf"/><rect x="561.5" y="746.6" width="350.1" height="36.89999999999998" fill="#ffcaca"/><rect x="911.6" y="746.6" width="70.29999999999995" height="36.89999999999998" fill="#ffe566"/><rect x="981.9" y="746.6" width="141.10000000000002" height="36.89999999999998" fill="#808080"/><line x1="561.5" y1="746.6" x2="1123" y2="746.6" stroke="#7a7a7a" stroke-width="1.5"/><line x1="561.5" y1="746.6" x2="1123" y2="746.6" stroke="#0f6fc6" stroke-width="4" stroke-dasharray="8 4"/><defs><clipPath id="snrclip"><rect x="561.5" y="349.5" width="561.5" height="434.0"/></clipPath></defs><polyline clip-path="url(#snrclip)" points="644.5,380.9 646.9,384.1 649.3,387.2 651.7,390.3 654.1,393.2 656.5,396.1 658.9,398.9 661.3,401.7 663.7,404.3 666.1,407.0 668.5,409.5 670.9,412.0 673.3,414.5 675.7,416.9 678.1,419.2 680.5,421.5 682.9,423.8 685.3,426.0 687.7,428.2 690.1,430.3 692.5,432.4 694.9,434.4 697.3,436.5 699.7,438.4 702.1,440.4 704.5,442.3 706.9,444.2 709.3,446.0 711.7,447.9 714.1,449.7 716.5,451.4 718.9,453.2 721.3,454.9 723.7,456.6 726.1,458.2 728.5,459.9 730.9,461.5 733.3,463.1 735.7,464.7 738.1,466.2 740.5,467.7 743.0,469.3 745.4,470.7 747.8,472.2 750.2,473.7 752.6,475.1 755.0,476.5 757.4,477.9 759.8,479.3 762.2,480.7 764.6,482.0 767.0,483.4 769.4,484.7 771.8,486.0 774.2,487.3 776.6,488.5 779.0,489.8 781.4,491.0 783.8,492.3 786.2,493.5 788.6,494.7 791.0,495.9 793.4,497.1 795.8,498.3 798.2,499.4 800.6,500.6 803.0,501.7 805.4,502.8 807.8,503.9 810.2,505.0 812.6,506.1 815.0,507.2 817.4,508.3 819.8,509.3 822.2,510.4 824.6,511.4 827.0,512.5 829.4,513.5 831.8,514.5 834.2,515.5 836.6,516.5 839.0,517.5 841.4,518.5 843.8,519.4 846.2,520.4 848.6,521.4 851.1,522.3 853.5,523.2 855.9,524.2 858.3,525.1 860.7,526.0 863.1,526.9 865.5,527.8 867.9,528.7 870.3,529.6 872.7,530.5 875.1,531.4 877.5,532.2 879.9,533.1 882.3,534.0 884.7,534.8 887.1,535.6 889.5,536.5 891.9,537.3 894.3,538.1 896.7,538.9 899.1,539.8 901.5,540.6 903.9,541.4 906.3,542.2 908.7,543.0 911.1,543.7 913.5,544.5 915.9,545.3 918.3,546.1 920.7,546.8 923.1,547.6 925.5,548.3 927.9,549.1 930.3,549.8 932.7,550.6 935.1,551.3 937.5,552.0 939.9,552.8 942.3,553.5 944.7,554.2 947.1,554.9 949.5,555.6 951.9,556.3 954.3,557.0 956.7,557.7 959.1,558.4 961.6,559.1 964.0,559.8 966.4,560.4 968.8,561.1 971.2,561.8 973.6,562.4 976.0,563.1 978.4,563.8 980.8,564.4 983.2,565.1 985.6,565.7 988.0,566.4 990.4,567.0 992.8,567.6 995.2,568.3 997.6,568.9 1000.0,569.5 1002.4,570.1 1004.8,570.8 1007.2,571.4 1009.6,572.0 1012.0,572.6 1014.4,573.2 1016.8,573.8 1019.2,574.4 1021.6,575.0 1024.0,575.6 1026.4,576.2 1028.8,576.8 1031.2,577.4 1033.6,577.9 1036.0,578.5 1038.4,579.1 1040.8,579.7 1043.2,580.2 1045.6,580.8 1048.0,581.4 1050.4,581.9 1052.8,582.5 1055.2,583.0 1057.6,583.6 1060.0,584.1 1062.4,584.7 1064.8,585.2 1067.2,585.8 1069.7,586.3 1072.1,586.8 1074.5,587.4 1076.9,587.9 1079.3,588.4 1081.7,589.0 1084.1,589.5 1086.5,590.0 1088.9,590.5 1091.3,591.1 1093.7,591.6 1096.1,592.1 1098.5,592.6 1100.9,593.1 1103.3,593.6 1105.7,594.1 1108.1,594.6 1110.5,595.1 1112.9,595.6 1115.3,596.1 1117.7,596.6 1120.1,597.1 1122.5,597.6" fill="none" stroke="#0f6fc6" stroke-width="3.5" stroke-linejoin="round"/><polyline points="563,386 564,500 566.5,673 568,420 570.5,639 572,405 575,667 577,430 579,380 585,492 590,661 595,492 600,380" fill="none" stroke="#0f6fc6" stroke-width="3.5" stroke-linejoin="round" stroke-linecap="round"/><polygon points="562.5,388 566,384 569,392 573,380 577,386 578,520 574,640 570,560 567,520 562.5,540" fill="#0f6fc6"/><line x1="911.6" y1="349.5" x2="911.6" y2="783.5" stroke="#262626" stroke-width="3.6" stroke-dasharray="7 4 1 4"/><line x1="981.9" y1="349.5" x2="981.9" y2="783.5" stroke="#262626" stroke-width="3.6" stroke-dasharray="7 5"/><rect x="561.5" y="349.5" width="561.5" height="434.0" fill="none" stroke="#262626" stroke-width="1.6"/><rect x="572.5" y="357.5" width="289.5" height="133.5" fill="#fff" stroke="#262626" stroke-width="1.4"/><line x1="582.5" y1="378.2" x2="646.5" y2="378.2" stroke="#262626" stroke-width="3.6" stroke-dasharray="8 3.5 2 3.5"/><text x="651" y="383.8" font-family="Liberation Sans" font-size="21" fill="#262626">Threshold Max Range</text><line x1="582.5" y1="409.2" x2="646.5" y2="409.2" stroke="#262626" stroke-width="3.6" stroke-dasharray="8 4"/><text x="651" y="414.8" font-family="Liberation Sans" font-size="21" fill="#262626">Objective Max Range</text><line x1="582.5" y1="440.2" x2="646.5" y2="440.2" stroke="#0f6fc6" stroke-width="3.6" stroke-dasharray="8 4"/><text x="651" y="445.8" font-family="Liberation Sans" font-size="21" fill="#262626">Detectability</text><line x1="582.5" y1="471.2" x2="646.5" y2="471.2" stroke="#0f6fc6" stroke-width="3.6"/><text x="651" y="476.8" font-family="Liberation Sans" font-size="21" fill="#262626">AutomotiveRadar</text><text x="556" y="441.6" font-family="Liberation Sans" font-size="26" text-anchor="end" fill="#262626">40</text><text x="556" y="571" font-family="Liberation Sans" font-size="26" text-anchor="end" fill="#262626">20</text><text x="556" y="699.5" font-family="Liberation Sans" font-size="26" text-anchor="end" fill="#262626">0</text><text x="841" y="809.5" font-family="Liberation Sans" font-size="26" text-anchor="middle" fill="#262626">200</text><text x="1122" y="809.5" font-family="Liberation Sans" font-size="26" text-anchor="middle" fill="#262626">400</text><text x="842" y="853" font-family="Liberation Sans" font-size="29" text-anchor="middle" fill="#262626">Target Range (m)</text><text transform="translate(505.7,565.5) rotate(-90)" font-family="Liberation Sans" font-size="29" text-anchor="middle" fill="#262626">SNR (dB)</text><rect x="1249.5" y="378.5" width="575.0" height="404.5" fill="#cfd9fd"/><line x1="1297.6" y1="783" x2="1297.6" y2="774" stroke="#2a3552" stroke-width="1.6"/><line x1="1297.6" y1="378.5" x2="1297.6" y2="387.5" stroke="#2a3552" stroke-width="1.6"/><line x1="1417.2749999999999" y1="783" x2="1417.2749999999999" y2="777" stroke="#2a3552" stroke-width="1.6"/><line x1="1417.2749999999999" y1="378.5" x2="1417.2749999999999" y2="384.5" stroke="#2a3552" stroke-width="1.6"/><line x1="1536.9499999999998" y1="783" x2="1536.9499999999998" y2="774" stroke="#2a3552" stroke-width="1.6"/><line x1="1536.9499999999998" y1="378.5" x2="1536.9499999999998" y2="387.5" stroke="#2a3552" stroke-width="1.6"/><line x1="1656.625" y1="783" x2="1656.625" y2="777" stroke="#2a3552" stroke-width="1.6"/><line x1="1656.625" y1="378.5" x2="1656.625" y2="384.5" stroke="#2a3552" stroke-width="1.6"/><line x1="1776.3" y1="783" x2="1776.3" y2="774" stroke="#2a3552" stroke-width="1.6"/><line x1="1776.3" y1="378.5" x2="1776.3" y2="387.5" stroke="#2a3552" stroke-width="1.6"/><line x1="1249.5" y1="399.95000000000005" x2="1255.5" y2="399.95000000000005" stroke="#2a3552" stroke-width="1.6"/><line x1="1824.5" y1="399.95000000000005" x2="1818.5" y2="399.95000000000005" stroke="#2a3552" stroke-width="1.6"/><line x1="1249.5" y1="472.25" x2="1260.5" y2="472.25" stroke="#2a3552" stroke-width="1.6"/><line x1="1824.5" y1="472.25" x2="1813.5" y2="472.25" stroke="#2a3552" stroke-width="1.6"/><line x1="1249.5" y1="544.5500000000001" x2="1255.5" y2="544.5500000000001" stroke="#2a3552" stroke-width="1.6"/><line x1="1824.5" y1="544.5500000000001" x2="1818.5" y2="544.5500000000001" stroke="#2a3552" stroke-width="1.6"/><line x1="1249.5" y1="616.85" x2="1260.5" y2="616.85" stroke="#2a3552" stroke-width="1.6"/><line x1="1824.5" y1="616.85" x2="1813.5" y2="616.85" stroke="#2a3552" stroke-width="1.6"/><line x1="1249.5" y1="689.15" x2="1255.5" y2="689.15" stroke="#2a3552" stroke-width="1.6"/><line x1="1824.5" y1="689.15" x2="1818.5" y2="689.15" stroke="#2a3552" stroke-width="1.6"/><line x1="1249.5" y1="761.45" x2="1260.5" y2="761.45" stroke="#2a3552" stroke-width="1.6"/><line x1="1824.5" y1="761.45" x2="1813.5" y2="761.45" stroke="#2a3552" stroke-width="1.6"/><line x1="1249.5" y1="616.8" x2="1824.5" y2="616.8" stroke="#808080" stroke-width="3"/><line x1="1249.5" y1="543.7" x2="1824.5" y2="543.7" stroke="#8a1c1c" stroke-width="3.2" stroke-dasharray="9 5"/><line x1="1297.6" y1="400" x2="1297.6" y2="543.7" stroke="#737373" stroke-width="2" stroke-dasharray="7 5"/><line x1="1297.6" y1="400" x2="1536.9499999999998" y2="543.7" stroke="#737373" stroke-width="2" stroke-dasharray="7 5"/><line x1="1297.6" y1="400" x2="1776.3" y2="543.7" stroke="#737373" stroke-width="2" stroke-dasharray="7 5"/><polygon points="1285.1,408.0 1310.1,408.0 1297.6,387.0" fill="#0f6fc6"/><polygon points="1285.1,552.0 1310.1,552.0 1297.6,531.0" fill="#8a1c1c"/><polygon points="1524.4499999999998,552.0 1549.4499999999998,552.0 1536.9499999999998,531.0" fill="#ff3b30"/><polygon points="1763.8,552.0 1788.8,552.0 1776.3,531.0" fill="#ff9d9d"/><rect x="1249.5" y="378.5" width="575.0" height="404.5" fill="none" stroke="#1e2438" stroke-width="1.8"/><rect x="1260.5" y="629.5" width="316" height="144.5" fill="#fff" stroke="#262626" stroke-width="1.4"/><polygon points="1295,655.0 1309,655.0 1302,643.0" fill="#0f6fc6"/><polygon points="1295,686.0 1309,686.0 1302,674.0" fill="#8a1c1c"/><line x1="1271" y1="712.3" x2="1334" y2="712.3" stroke="#808080" stroke-width="3.8"/><rect x="1271" y="732.8" width="63" height="31" fill="#cfd9fd"/><text x="1339" y="655.7" font-family="Liberation Sans" font-size="21" fill="#262626">AutomotiveRadar</text><text x="1339" y="686.7" font-family="Liberation Sans" font-size="21" fill="#262626">Target Positions</text><text x="1339" y="717.7" font-family="Liberation Sans" font-size="21" fill="#262626">Effective Radius = Inf km</text><text x="1339" y="753.7" font-family="Liberation Sans" font-size="21" fill="#262626">Free Space</text><text x="1244" y="480" font-family="Liberation Sans" font-size="26" text-anchor="end" fill="#262626">2</text><text x="1244" y="625.5" font-family="Liberation Sans" font-size="26" text-anchor="end" fill="#262626">0</text><text x="1244" y="769.5" font-family="Liberation Sans" font-size="26" text-anchor="end" fill="#262626">-2</text><text x="1297.6" y="809.5" font-family="Liberation Sans" font-size="26" text-anchor="middle" fill="#262626">0</text><text x="1536.9499999999998" y="809.5" font-family="Liberation Sans" font-size="26" text-anchor="middle" fill="#262626">200</text><text x="1776.3" y="809.5" font-family="Liberation Sans" font-size="26" text-anchor="middle" fill="#262626">400</text><text x="1537" y="853" font-family="Liberation Sans" font-size="29" text-anchor="middle" fill="#262626">Ground Range (m)</text><text transform="translate(1200,580) rotate(-90)" font-family="Liberation Sans" font-size="29" text-anchor="middle" fill="#262626">Height (m)</text><text x="1537" y="370" font-family="Liberation Sans" font-size="29" text-anchor="middle" fill="#262626">Constant Height Target</text></svg>
</body></html>
